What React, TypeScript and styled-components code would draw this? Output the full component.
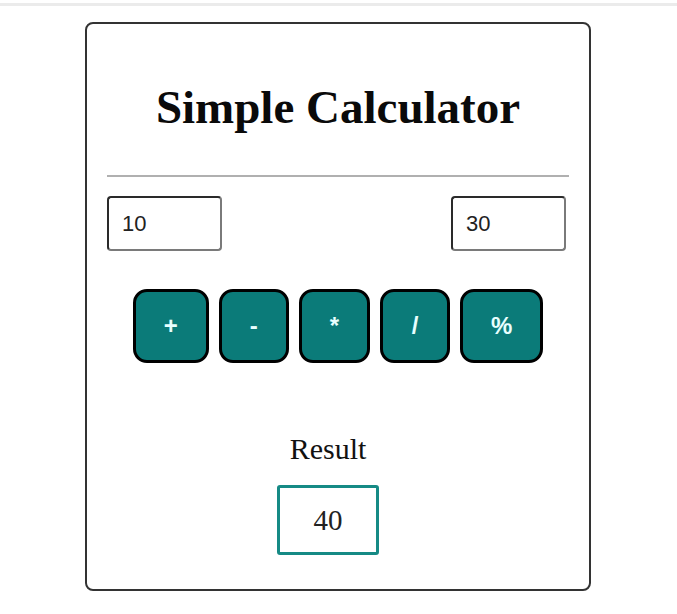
import React, { useState } from "react";
import styled, { createGlobalStyle } from "styled-components";

const GlobalStyle = createGlobalStyle`
  html, body {
    margin: 0;
    padding: 0;
    background: #ffffff;
  }
  body {
    font-family: "Liberation Serif", "Times New Roman", serif;
    color: #111;
  }
`;

const TopRule = styled.div`
  margin-top: 3px;
  height: 3px;
  background-color: #ebebeb;
`;

const Page = styled.div`
  display: flex;
  justify-content: center;
  padding-top: 16px;
  padding-right: 1px;
`;

const Card = styled.div`
  width: 506px;
  box-sizing: border-box;
  border: 2px solid #333;
  border-radius: 8px;
  padding: 0 20px 34px;
  display: flex;
  flex-direction: column;
`;

const Title = styled.h1`
  margin: 58px 0 0;
  font-family: "Liberation Serif", "Times New Roman", serif;
  font-size: 47px;
  line-height: 51px;
  font-weight: bold;
  text-align: center;
  color: #0a0a0a;
`;

const Divider = styled.hr`
  margin: 42px 0 0;
  border: none;
  height: 2px;
  background-color: #b0b0b0;
`;

const InputRow = styled.div`
  margin-top: 19px;
  display: flex;
  justify-content: space-between;
  padding-right: 3px;
`;

const NumberInput = styled.input`
  width: 115px;
  height: 55px;
  box-sizing: border-box;
  padding: 0 0 0 13px;
  border: 2px solid #2a2a2a;
  border-right-color: #7a7a7a;
  border-bottom-color: #7a7a7a;
  border-radius: 4px;
  font-family: "Liberation Sans", Arial, sans-serif;
  font-size: 22px;
  color: #222;
  outline: none;
`;

const ButtonRow = styled.div`
  margin-top: 38px;
  display: flex;
  justify-content: center;
  gap: 10px;
`;

const OpButton = styled.button`
  height: 74px;
  min-width: 70px;
  box-sizing: border-box;
  padding: 0 28px;
  border: 3px solid #000;
  border-radius: 14px;
  background-color: #0b7b79;
  color: #e8ffff;
  font-family: "Liberation Sans", Arial, sans-serif;
  font-size: 24px;
  font-weight: bold;
  cursor: pointer;
`;

const ResultBlock = styled.div`
  margin-top: 69px;
  margin-right: 20px;
  display: flex;
  flex-direction: column;
  align-items: center;
`;

const ResultLabel = styled.div`
  font-size: 30px;
  line-height: 34px;
  color: #111;
`;

const ResultBox = styled.div`
  margin-top: 19px;
  width: 102px;
  height: 70px;
  box-sizing: border-box;
  border: 3px solid #168a85;
  border-radius: 3px;
  display: flex;
  align-items: center;
  justify-content: center;
  font-size: 29px;
  color: #222;
`;

const ops = ["+", "-", "*", "/", "%"];

const calc = (a: number, b: number, op: string) => {
  switch (op) {
    case "+":
      return a + b;
    case "-":
      return a - b;
    case "*":
      return a * b;
    case "/":
      return b === 0 ? 0 : a / b;
    case "%":
      return b === 0 ? 0 : a % b;
    default:
      return 0;
  }
};

const App = () => {
  const [first, setFirst] = useState("10");
  const [second, setSecond] = useState("30");
  const [result, setResult] = useState<number>(40);

  return (
    <>
      <GlobalStyle />
      <TopRule />
      <Page>
        <Card>
          <Title>Simple Calculator</Title>
          <Divider />
          <InputRow>
            <NumberInput value={first} onChange={(e) => setFirst(e.target.value)} />
            <NumberInput value={second} onChange={(e) => setSecond(e.target.value)} />
          </InputRow>
          <ButtonRow>
            {ops.map((op) => (
              <OpButton
                key={op}
                onClick={() => setResult(calc(Number(first), Number(second), op))}
              >
                {op}
              </OpButton>
            ))}
          </ButtonRow>
          <ResultBlock>
            <ResultLabel>Result</ResultLabel>
            <ResultBox>{result}</ResultBox>
          </ResultBlock>
        </Card>
      </Page>
    </>
  );
};

export default App;
